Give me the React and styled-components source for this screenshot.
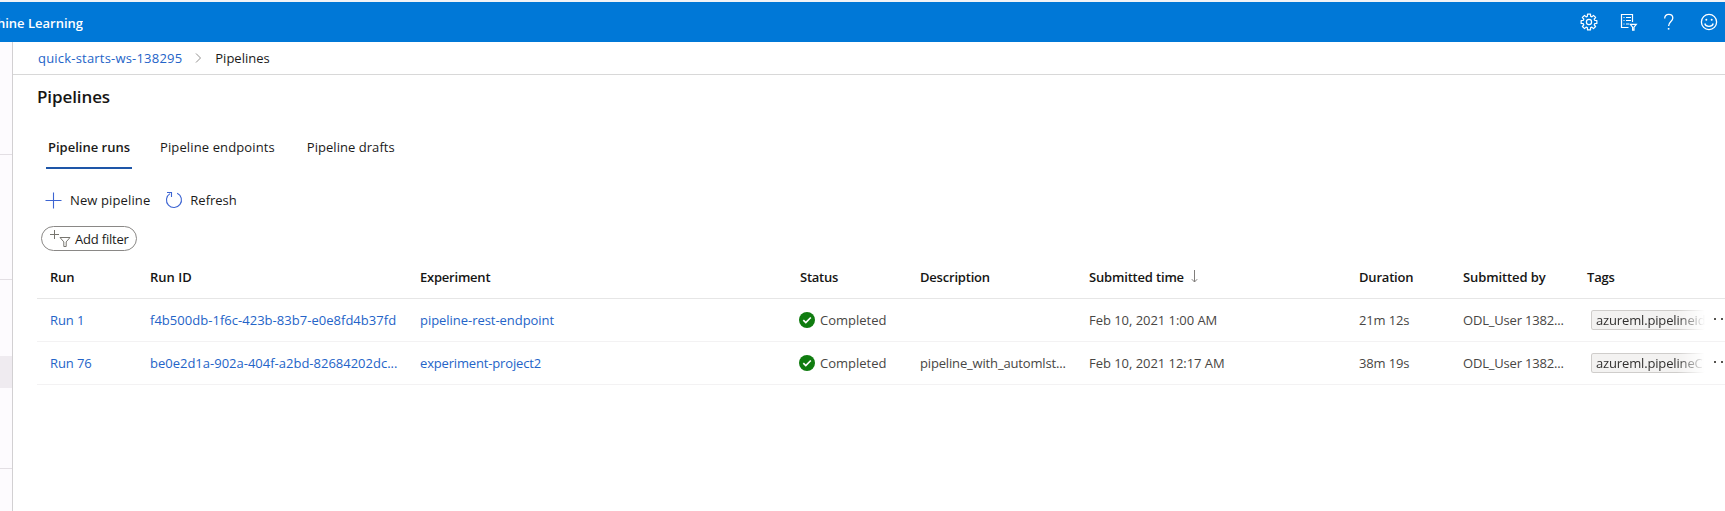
import React from "react";
import styled, { createGlobalStyle, css } from "styled-components";

const GlobalStyle = createGlobalStyle`
  * { box-sizing: border-box; }
  body {
    margin: 0;
    background: #fff;
    color: #1b1a19;
    font: 13px/20px "Open Sans", "Noto Sans", sans-serif;
    overflow: hidden;
  }
`;

const Page = styled.div`
  display: flex;
  flex-direction: column;
  width: 100%;
  height: 511px;
  overflow: hidden;
`;

const TopBar = styled.header`
  display: flex;
  align-items: center;
  justify-content: space-between;
  flex: none;
  height: 42px;
  padding-top: 2px;
  border-top: 2px solid #f1f3f6;
  background: #0078d7;
  color: #fff;
`;

const Product = styled.div`
  display: flex;
  justify-content: flex-end;
  width: 83px;
  overflow: hidden;
  white-space: nowrap;
  font-weight: 600;
`;

const TopIcons = styled.div`
  display: flex;
  align-items: center;
  gap: 20px;
  padding: 0 6px 2px 0;
  svg { display: block; width: 20px; height: 20px; }
`;

const Body = styled.div`
  display: flex;
  flex: 1;
  min-height: 0;
`;

const SideNav = styled.nav`
  display: flex;
  flex-direction: column;
  flex: none;
  width: 13px;
  border-right: 1px solid #d2d0d2;
  background: #fdfbfe;
`;

const NavGroup = styled.div`
  flex: none;
  height: ${(p) => p.$height}px;
  padding-top: ${(p) => p.$before || 0}px;
  border-bottom: 1px solid #e3dfe4;
`;

const NavSelected = styled.div`
  height: 32px;
  background: #efebf0;
`;

const Main = styled.main`
  display: flex;
  flex-direction: column;
  flex: 1;
  min-width: 0;
`;

const Breadcrumbs = styled.div`
  display: flex;
  align-items: center;
  height: 33px;
  padding: 0 0 0 25px;
  border-bottom: 1px solid #d8d8d8;
  svg { margin: 0 13px 0 13px; }
`;

const Label = styled.span`
  white-space: nowrap;
  letter-spacing: ${(p) => p.$track || 0}px;
  ${(p) => p.$link && css`color: #2464c8;`}
`;

const Title = styled.h1`
  margin: 9px 0 0 24px;
  font-size: 17px;
  line-height: 26px;
  font-weight: 600;
  letter-spacing: -0.1px;
  color: #161514;
`;

const Tabs = styled.div`
  display: flex;
  gap: 14px;
  margin: 21px 0 0 33px;
`;

const Tab = styled.div`
  height: 38px;
  padding: 6px ${(p) => (p.$active ? "2px" : "0")} 0;
  margin-right: ${(p) => p.$after || 0}px;
  border-bottom: 2px solid ${(p) => (p.$active ? "#1e56a8" : "transparent")};
  font-weight: ${(p) => (p.$active ? 600 : 400)};
  white-space: nowrap;
  letter-spacing: ${(p) => p.$track || 0}px;
`;

const Commands = styled.div`
  display: flex;
  align-items: center;
  height: 20px;
  margin: 21px 0 0 32px;
`;

const Command = styled.div`
  display: flex;
  align-items: center;
  gap: 7px;
  margin-right: 15px;
  svg { flex: none; }
`;

const FilterPill = styled.div`
  display: flex;
  align-items: center;
  flex: none;
  width: 96px;
  height: 25px;
  margin: 16px 0 0 28px;
  padding: 0 0 0 8px;
  border: 1px solid #8a8886;
  border-radius: 13px;
  svg { flex: none; margin-right: 4px; }
`;

const Table = styled.div`
  margin-left: 24px;
`;

const Row = styled.div`
  display: grid;
  grid-template-columns: 100px 270px 380px 120px 169px 270px 104px 124px 1fr;
  align-items: center;
  height: ${(p) => (p.$head ? 48 : 43)}px;
  padding: ${(p) => (p.$head ? "4px 0 0" : "0 0 1px")} 13px;
  padding-right: 0;
  border-bottom: 1px solid ${(p) => (p.$head ? "#e6e6e6" : "#f3f2f3")};
  color: ${(p) => (p.$head ? "#161514" : "#484644")};
  font-weight: ${(p) => (p.$head ? 600 : 400)};
`;

const Cell = styled.div`
  display: flex;
  align-items: center;
  min-width: 0;
  svg { flex: none; }
`;

const Status = styled(Cell)`
  gap: 5px;
  svg { margin: 1px 0 0 -1px; }
`;

const SortLabel = styled(Cell)`
  gap: 7px;
`;

const TagFrame = styled.div`
  width: 114px;
  height: 20px;
  margin: 1px 0 0 4px;
  padding: 0 0 0 4px;
  border: 1px solid #cfcdcb;
  border-right: 0;
  border-radius: 2px;
  background: #f3f2f1;
  color: #323130;
  line-height: 19px;
  overflow: hidden;
  mask-image: linear-gradient(to right, #000 86px, transparent 114px);
`;

const More = styled.div`
  display: flex;
  gap: 5px;
  margin: 0 0 2px 9px;
  &::before, &::after {
    content: "";
    width: 2px;
    height: 2px;
    background: #55534f;
  }
`;

const gearPath = (() => {
  const pts = [];
  for (let i = 0; i < 8; i++) {
    const a = (i * Math.PI) / 4;
    [[-0.28, 5.9], [-0.19, 8], [0.19, 8], [0.28, 5.9]].forEach(([d, r]) => {
      pts.push(`${(10 + r * Math.sin(a + d)).toFixed(2)} ${(10 - r * Math.cos(a + d)).toFixed(2)}`);
    });
  }
  return `M${pts.join("L")}Z`;
})();

const GearIcon = () => (
  <svg viewBox="0 0 20 20" fill="none" stroke="#fff" strokeWidth="1.2" strokeLinejoin="round">
    <path d={gearPath} />
    <circle cx="10" cy="10" r="2.6" />
  </svg>
);

const ListFilterIcon = () => (
  <svg viewBox="0 0 20 20" fill="none" stroke="#fff" strokeWidth="1.2">
    <path d="M9.5 15.5H2.5V2.5H13.5V10" />
    <path d="M4.5 5.5h1M7 5.5h5M4.5 8.5h1M7 8.5h5M4.5 12h1M7 12h3" />
    <path d="M11.3 12.3h6l-2.3 2.8v3h-1.4v-3z" />
  </svg>
);

const HelpIcon = () => (
  <svg viewBox="0 0 20 20" fill="none" stroke="#fff" strokeWidth="1.3">
    <path d="M5.7 6.5C5.7 3.7 7.4 2.3 9.8 2.3s4 1.4 4 3.7c0 3.3-4.2 3.8-4.2 8" />
    <path d="M9.6 16v1.6" strokeWidth="1.6" />
  </svg>
);

const SmileIcon = () => (
  <svg viewBox="0 0 20 20" fill="none" stroke="#fff" strokeWidth="1.3">
    <circle cx="10" cy="10" r="7.6" />
    <path d="M5.8 11.5c.8 3.7 7.6 3.7 8.4 0" />
    <circle cx="7.3" cy="7.8" r="1" fill="#fff" stroke="none" />
    <circle cx="12.7" cy="7.8" r="1" fill="#fff" stroke="none" />
  </svg>
);

const Chevron = () => (
  <svg width="7" height="10" viewBox="0 0 7 10" fill="none" stroke="#93918f">
    <path d="M1 .5 5.5 5 1 9.5" />
  </svg>
);

const PlusIcon = () => (
  <svg width="18" height="18" viewBox="0 0 18 18" stroke="#3c64d2" strokeWidth="1.1">
    <path d="M.5 9.5h16M8.5 1.5v16" />
  </svg>
);

const RefreshIcon = () => (
  <svg width="18" height="18" viewBox="0 0 18 18" fill="none" stroke="#3c64d2" strokeWidth="1.1">
    <path d="M12.2 2.2A7.5 7.5 0 1 1 5 2.6" />
    <path d="M2 1.5h4.5V6" />
  </svg>
);

const AddFilterIcon = () => (
  <svg width="21" height="18" viewBox="0 0 21 18" fill="none" stroke="#77756f">
    <path d="M0 4.5h9M4.5 0v9" />
    <path d="M10 7.5h10l-3.8 4.4v4.6h-2.4v-4.6z" />
  </svg>
);

const CheckIcon = () => (
  <svg width="16" height="16" viewBox="0 0 16 16" fill="none">
    <circle cx="8" cy="8" r="8" fill="#107c10" />
    <path d="M4.3 8.2 6.8 10.6 11.8 5.5" stroke="#fff" strokeWidth="1.7" />
  </svg>
);

const ArrowDown = () => (
  <svg width="7" height="13" viewBox="0 0 7 13" fill="none" stroke="#807e7c">
    <path d="M3.5 0v12M.8 9.2l2.7 2.8 2.7-2.8" />
  </svg>
);

const runs = [
  {
    name: "Run 1",
    id: "f4b500db-1f6c-423b-83b7-e0e8fd4b37fd",
    idTrack: 0.03,
    experiment: "pipeline-rest-endpoint",
    expTrack: -0.04,
    description: "",
    time: "Feb 10, 2021 1:00 AM",
    duration: "21m 12s",
    tag: "azureml.pipelineid",
  },
  {
    name: "Run 76",
    id: "be0e2d1a-902a-404f-a2bd-82684202dc...",
    idTrack: 0,
    experiment: "experiment-project2",
    expTrack: -0.16,
    description: "pipeline_with_automlst...",
    time: "Feb 10, 2021 12:17 AM",
    duration: "38m 19s",
    tag: "azureml.pipelineC",
  },
];

const RunRow = ({ run }) => (
  <Row>
    <Cell><Label $link $track={-0.1}>{run.name}</Label></Cell>
    <Cell><Label $link $track={run.idTrack}>{run.id}</Label></Cell>
    <Cell><Label $link $track={run.expTrack}>{run.experiment}</Label></Cell>
    <Status><CheckIcon /><Label>Completed</Label></Status>
    <Cell><Label $track={-0.16}>{run.description}</Label></Cell>
    <Cell><Label $track={-0.04}>{run.time}</Label></Cell>
    <Cell><Label $track={-0.15}>{run.duration}</Label></Cell>
    <Cell><Label $track={-0.18}>ODL_User 1382...</Label></Cell>
    <Cell>
      <TagFrame><Label $track={-0.15}>{run.tag}</Label></TagFrame>
      <More />
    </Cell>
  </Row>
);

export default function App() {
  return (
    <Page>
      <GlobalStyle />
      <TopBar>
        <Product>Machine Learning</Product>
        <TopIcons>
          <GearIcon />
          <ListFilterIcon />
          <HelpIcon />
          <SmileIcon />
        </TopIcons>
      </TopBar>
      <Body>
        <SideNav>
          <NavGroup $height={113} />
          <NavGroup $height={125} />
          <NavGroup $height={189} $before={76}><NavSelected /></NavGroup>
        </SideNav>
        <Main>
          <Breadcrumbs>
            <Label $link $track={0.2}>quick-starts-ws-138295</Label>
            <Chevron />
            <Label>Pipelines</Label>
          </Breadcrumbs>
          <Title>Pipelines</Title>
          <Tabs>
            <Tab $active $after={14}>Pipeline runs</Tab>
            <Tab $after={18} $track={0.12}>Pipeline endpoints</Tab>
            <Tab $track={0.04}>Pipeline drafts</Tab>
          </Tabs>
          <Commands>
            <Command><PlusIcon /><Label $track={0.12}>New pipeline</Label></Command>
            <Command><RefreshIcon /><Label>Refresh</Label></Command>
          </Commands>
          <FilterPill><AddFilterIcon /><Label $track={-0.2}>Add filter</Label></FilterPill>
          <Table>
            <Row $head>
              <Cell><Label $track={-0.2}>Run</Label></Cell>
              <Cell>Run ID</Cell>
              <Cell><Label $track={-0.22}>Experiment</Label></Cell>
              <Cell><Label $track={-0.25}>Status</Label></Cell>
              <Cell><Label $track={-0.2}>Description</Label></Cell>
              <SortLabel><Label $track={-0.18}>Submitted time</Label><ArrowDown /></SortLabel>
              <Cell><Label $track={-0.2}>Duration</Label></Cell>
              <Cell><Label $track={-0.1}>Submitted by</Label></Cell>
              <Cell><Label $track={-0.2}>Tags</Label></Cell>
            </Row>
            {runs.map((run) => <RunRow key={run.name} run={run} />)}
          </Table>
        </Main>
      </Body>
    </Page>
  );
}
